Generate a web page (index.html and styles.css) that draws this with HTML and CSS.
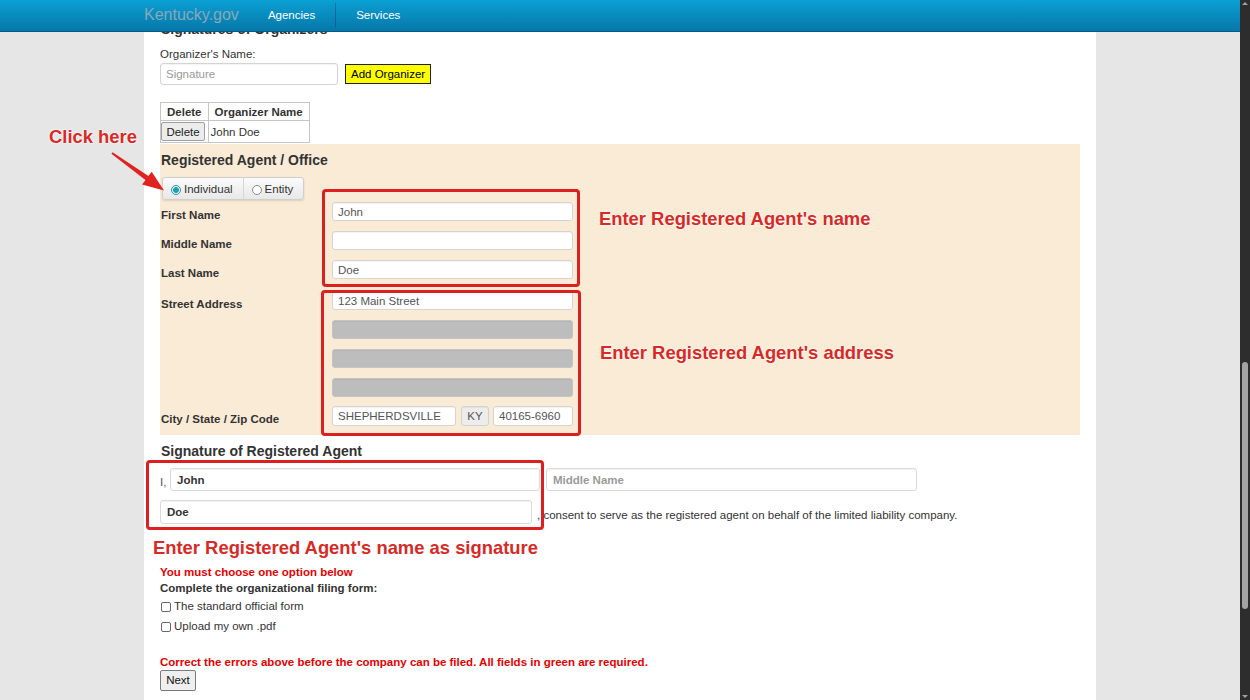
FILE: index.html
```html
<!DOCTYPE html>
<html lang="en">
<head>
<meta charset="utf-8">
<title>Kentucky.gov - Registered Agent</title>
<link rel="stylesheet" href="styles.css">
</head>
<body>
<header class="topbar">
  <div class="topbar-inner">
    <span class="brand">Kentucky.gov</span>
    <nav class="nav">
      <a class="nav-item">Agencies</a>
      <a class="nav-item nav-sep">Services</a>
    </nav>
  </div>
</header>

<main class="page">
  <h3 class="sec-title">Signatures of Organizers</h3>
  <div class="field-label">Organizer's Name:</div>
  <div class="org-row">
    <input class="txt org-input" placeholder="Signature">
    <button class="btn-yellow">Add Organizer</button>
  </div>
  <table class="org-table">
    <tr><th>Delete</th><th>Organizer Name</th></tr>
    <tr><td class="td-btn"><button class="btn-gray">Delete</button></td><td class="td-name">John Doe</td></tr>
  </table>

  <section class="agent">
    <h3 class="agent-title">Registered Agent / Office</h3>
    <div class="seg">
      <span class="seg-opt"><span class="radio on"></span>Individual</span>
      <span class="seg-opt"><span class="radio"></span>Entity</span>
    </div>
    <div class="agent-grid">
      <div class="lbl">First Name</div>
      <input class="txt in" value="John">
      <div class="lbl">Middle Name</div>
      <input class="txt in" value="">
      <div class="lbl">Last Name</div>
      <input class="txt in" value="Doe">
      <div class="lbl lbl-street">Street Address</div>
      <div class="addr">
        <input class="txt in" value="123 Main Street">
        <input class="txt in gray" value="">
        <input class="txt in gray" value="">
        <input class="txt in gray" value="">
      </div>
      <div class="lbl lbl-city">City / State / Zip Code</div>
      <div class="city-row">
        <input class="txt in-city" value="SHEPHERDSVILLE">
        <input class="txt in-state" value="KY">
        <input class="txt in-zip" value="40165-6960">
      </div>
    </div>
  </section>

  <h3 class="sig-title">Signature of Registered Agent</h3>
  <div class="sig-row1">
    <span class="sig-i">I,</span>
    <input class="txt sig-in sig-first" value="John">
    <input class="txt sig-in sig-middle" placeholder="Middle Name">
  </div>
  <div class="sig-row2">
    <input class="txt sig-in sig-last" value="Doe">
    <span class="consent">, consent to serve as the registered agent on behalf of the limited liability company.</span>
  </div>

  <div class="must">You must choose one option below</div>
  <div class="complete">Complete the organizational filing form:</div>
  <div class="check-line"><span class="cbox"></span>The standard official form</div>
  <div class="check-line"><span class="cbox"></span>Upload my own .pdf</div>
  <div class="errors">Correct the errors above before the company can be filed. All fields in green are required.</div>
  <button class="next">Next</button>
</main>

<!-- annotation overlay -->
<div class="annot-box box-name"></div>
<div class="annot-box box-addr"></div>
<div class="annot-box box-sig"></div>
<div class="annot-text t-click">Click here</div>
<div class="annot-text t-name">Enter Registered Agent's name</div>
<div class="annot-text t-addr">Enter Registered Agent's address</div>
<div class="annot-text t-sig">Enter Registered Agent's name as signature</div>
<svg class="arrow" width="200" height="200" viewBox="0 0 200 200">
  <polygon points="112.6,152.2 148.4,176.1 151.7,171.7 164,190.5 142.1,184.5 145.4,180.1 111.4,153.8" fill="#e0231f"/>
</svg>

<div class="sb">
  <span class="sb-up"></span>
  <span class="sb-thumb"></span>
  <span class="sb-down"></span>
</div>
</body>
</html>
```

FILE: styles.css
```css
* { box-sizing: border-box; }

html, body {
  margin: 0;
  padding: 0;
  height: 700px;
  overflow: hidden;
}

body {
  background: #e6e6e6;
  font-family: "Liberation Sans", Arial, sans-serif;
  font-size: 11.5px;
  color: #333;
  width: 1240px;
}

/* ---------- header ---------- */
.topbar {
  position: fixed;
  top: 0;
  left: 0;
  width: 1240px;
  height: 32px;
  background: linear-gradient(#0ba0d4, #0677a8);
  border-bottom: 1px solid #045a82;
  z-index: 5;
}
.topbar-inner {
  width: 952px;
  margin-left: 144px;
  height: 30px;
  display: flex;
  align-items: center;
}
.brand {
  font-size: 16px;
  color: #8aa8b7;
  margin-right: 9px;
}
.nav {
  display: flex;
  align-self: stretch;
}
.nav-item {
  color: #fff;
  font-size: 11.5px;
  padding: 0 20px;
  display: flex;
  align-items: center;
}
.nav-sep {
  border-left: 1px solid rgba(0, 45, 75, 0.35);
  margin: 3px 0;
}

/* ---------- page ---------- */
.page {
  width: 952px;
  margin-left: 144px;
  height: 700px;
  background: #fff;
  padding: 21px 16px 0;
}
.sec-title {
  margin: 0 0 0 1px;
  font-size: 14px;
  line-height: 17px;
  font-weight: bold;
}
.field-label {
  margin-top: 8.5px;
  line-height: 15px;
}
.org-row {
  margin-top: 1.5px;
  display: flex;
  align-items: center;
  gap: 7px;
  height: 22px;
}
.txt {
  font-family: "Liberation Sans", Arial, sans-serif;
  font-size: 11.5px;
  color: #555;
  border: 1px solid #d4d4d4;
  border-radius: 3px;
  padding: 0 5px;
  background: #fff;
  box-shadow: inset 0 1px 1px rgba(0, 0, 0, 0.05);
  outline: none;
  margin: 0;
}
.txt::placeholder { color: #9a9a9a; }
.org-input {
  width: 178px;
  height: 22px;
}
.btn-yellow {
  height: 20px;
  padding: 0 5px;
  background: #ffff00;
  border: 1px solid #222;
  border-radius: 0;
  font-family: "Liberation Sans", Arial, sans-serif;
  font-size: 11.5px;
  color: #000;
}

.org-table {
  margin-top: 17px;
  border-collapse: collapse;
  border: 1px solid #a8a8a8;
}
.org-table th {
  height: 18px;
  padding: 0 6px;
  border: 1px solid #c6c6c6;
  font-weight: bold;
  text-align: center;
  color: #333;
}
.org-table td {
  height: 22px;
  border: 1px solid #c6c6c6;
  padding: 0;
}
.td-btn { padding: 1px; }
.td-name { padding-left: 2px !important; }
.btn-gray {
  display: block;
  width: 44px;
  height: 19px;
  padding: 0;
  background: #ececec;
  border: 1px solid #a0a0a0;
  border-radius: 2px;
  font-family: "Liberation Sans", Arial, sans-serif;
  font-size: 11.5px;
  color: #222;
}

/* ---------- registered agent ---------- */
.agent {
  margin-top: 1px;
  background: #faebd7;
  padding: 8px 0 9px 1px;
}
.agent-title {
  margin: 0;
  font-size: 14px;
  line-height: 17px;
  font-weight: bold;
}
.seg {
  margin: 8px 0 0 1px;
  display: flex;
  width: fit-content;
  height: 23px;
  border: 1px solid #cfcfcf;
  border-radius: 3px;
  background: linear-gradient(#fbfbfb, #e8e8e8);
  box-shadow: 0 1px 2px rgba(0, 0, 0, 0.12);
}
.seg-opt {
  display: flex;
  align-items: center;
  gap: 3px;
  padding: 0 10px 0 8px;
  color: #333;
}
.seg-opt + .seg-opt { border-left: 1px solid #d6d6d6; }
.radio {
  width: 10px;
  height: 10px;
  border-radius: 50%;
  border: 1px solid #8a8a8a;
  background: #fff;
  margin-top: 2px;
}
.radio.on {
  border-color: #2b95a3;
  background: radial-gradient(circle, #22a0b1 0 2.6px, #e4f5f7 3.2px);
}

.agent-grid {
  margin-top: 2px;
  display: grid;
  grid-template-columns: 171px 241px;
  row-gap: 10px;
  align-items: start;
}
.lbl {
  font-weight: bold;
  height: 19px;
  padding-top: 7px;
  line-height: 13px;
  color: #333;
  white-space: nowrap;
}
.lbl-street { margin-top: 2px; }
.in {
  width: 241px;
  height: 19px;
  display: block;
}
.addr {
  display: flex;
  flex-direction: column;
  gap: 10px;
  margin-top: 2px;
}
.gray {
  background: #bdbdbd;
  border-color: #c4c4c4;
}
.city-row {
  display: flex;
  gap: 4px;
  margin-top: -1px;
}
.lbl-city { margin-top: -1px; }
.in-city, .in-state, .in-zip { height: 20px; }
.in-city { width: 124px; }
.in-state {
  width: 28px;
  margin-left: 1px;
  background: #ededed;
  border-color: #d2d2d2;
  text-align: center;
  padding: 0;
}
.in-zip { width: 80px; }

/* ---------- signature ---------- */
.sig-title {
  margin: 7.5px 0 0 1px;
  font-size: 14px;
  line-height: 17px;
  font-weight: bold;
}
.sig-row1 {
  margin-top: 8.5px;
  display: flex;
  align-items: center;
}
.sig-i {
  width: 10px;
  color: #555;
  padding-top: 4px;
}
.sig-in {
  height: 23px;
  padding: 0 6px;
  font-weight: bold;
  color: #333;
  border-color: #dadada;
}
.sig-in::placeholder { color: #9a9a9a; font-weight: bold; }
.sig-first { width: 370px; }
.sig-middle { width: 371px; margin-left: 6px; }
.sig-row2 {
  margin-top: 9px;
  display: flex;
  align-items: center;
}
.sig-last { width: 372px; height: 24px; }
.consent {
  margin-left: 5px;
  padding-top: 6px;
  color: #333;
}

.must {
  margin-top: 40.5px;
  color: #e60000;
  font-weight: bold;
  line-height: 15px;
}
.complete {
  font-weight: bold;
  line-height: 16px;
}
.check-line {
  display: flex;
  align-items: center;
  gap: 3px;
  height: 20px;
  padding-left: 1px;
  color: #333;
}
.cbox {
  width: 10px;
  height: 10px;
  border: 1px solid #666;
  border-radius: 2px;
  background: #fff;
  margin-top: 3px;
}
.errors {
  margin-top: 19px;
  color: #e60000;
  font-weight: bold;
  line-height: 15px;
}
.next {
  display: block;
  width: 36px;
  height: 21px;
  padding: 0;
  background: #efefef;
  border: 1px solid #7a7a7a;
  border-radius: 2px;
  font-family: "Liberation Sans", Arial, sans-serif;
  font-size: 11.5px;
  color: #111;
}

/* ---------- annotation overlay ---------- */
.annot-box {
  position: absolute;
  border: 3px solid #dc1f1f;
  border-radius: 4px;
}
.box-name { left: 322px; top: 189px; width: 258px; height: 98px; }
.box-addr { left: 321px; top: 290px; width: 260px; height: 146px; }
.box-sig  { left: 146px; top: 460px; width: 398px; height: 70px; }

.annot-text {
  position: absolute;
  font-family: "Liberation Sans", Arial, sans-serif;
  font-weight: bold;
  font-size: 18.4px;
  line-height: 21px;
  color: #d72a26;
  white-space: nowrap;
  text-shadow: 0 0 2px #fff, 0 0 2px #fff;
}
.t-click { left: 49px; top: 126px; }
.t-name  { left: 599px; top: 208px; }
.t-addr  { left: 600px; top: 342px; }
.t-sig   { left: 153px; top: 537px; }

.arrow {
  position: absolute;
  left: 0;
  top: 0;
}

/* ---------- fake scrollbar ---------- */
.sb {
  position: fixed;
  top: 0;
  right: 0;
  width: 10px;
  height: 700px;
  background: #2d2d2d;
}
.sb-thumb {
  position: absolute;
  left: 2px;
  top: 362px;
  width: 6px;
  height: 247px;
  background: #a3a3a3;
  border-radius: 3px;
}
.sb-up, .sb-down {
  position: absolute;
  left: 2px;
  width: 0;
  height: 0;
  border-left: 3px solid transparent;
  border-right: 3px solid transparent;
}
.sb-up { top: 2px; border-bottom: 3px solid #a0a0a0; }
.sb-down { bottom: 2px; border-top: 3px solid #a0a0a0; }
```
